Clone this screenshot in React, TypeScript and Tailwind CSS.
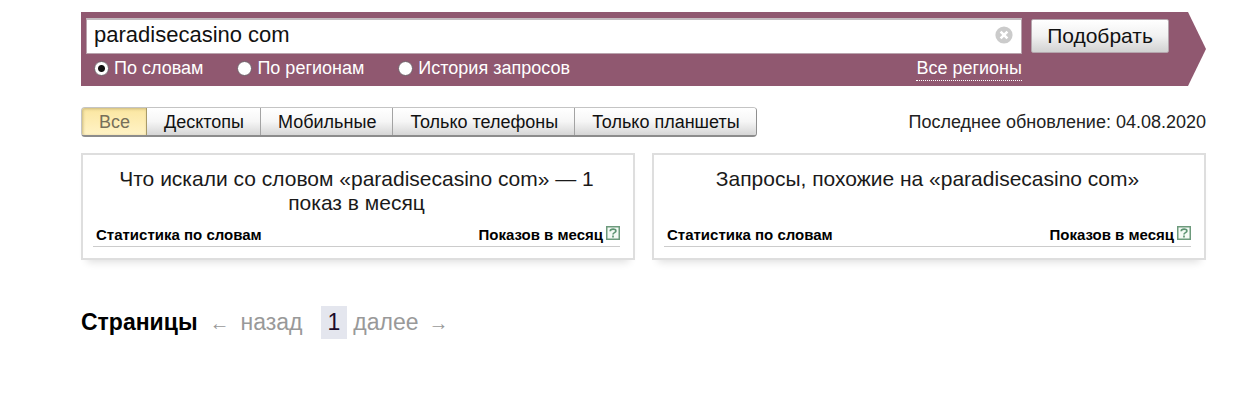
import { useState } from "react"

const modes = ["По словам", "По регионам", "История запросов"]
const devices = ["Все", "Десктопы", "Мобильные", "Только телефоны", "Только планшеты"]

const SearchBar = () => {
  const [query, setQuery] = useState("paradisecasino com")
  const [mode, setMode] = useState(modes[0])

  return (
    <form
      onSubmit={(e) => e.preventDefault()}
      className="flex h-[74px] items-start gap-[9px] bg-[#905870] pt-1.5 pr-[37px] pl-[5px] [clip-path:polygon(0_0,calc(100%-18px)_0,100%_50%,calc(100%-18px)_100%,0_100%)]"
    >
      <div className="min-w-0 flex-1">
        <div className="flex h-9 items-center border border-t-2 border-[#b9a3ad] border-t-[#c4bcc0] bg-white pr-2">
          <input
            type="text"
            aria-label="Запрос"
            value={query}
            onChange={(e) => setQuery(e.target.value)}
            className="h-full min-w-0 flex-1 bg-transparent pb-1 pl-[7px] text-[22px] text-[#111] outline-none"
          />
          <button type="button" aria-label="Очистить" className="mb-1" onClick={() => setQuery("")}>
            <svg viewBox="0 0 18 18" className="block size-[18px]">
              <circle cx="9" cy="9" r="8.6" fill="#cbcbcb" />
              <path d="M5.6 5.6l6.8 6.8M12.4 5.6l-6.8 6.8" stroke="#fff" strokeWidth="2.6" />
            </svg>
          </button>
        </div>
        <div className="flex items-center justify-between pl-2 text-lg text-white">
          <div className="flex gap-[34px]">
            {modes.map((item) => (
              <label key={item} className="flex items-center gap-[5px]">
                <input
                  type="radio"
                  name="mode"
                  checked={mode === item}
                  onChange={() => setMode(item)}
                  className="size-[15px] appearance-none rounded-full border border-[#6e6068] bg-white checked:bg-[radial-gradient(circle,#111_3px,#fff_4px)]"
                />
                {item}
              </label>
            ))}
          </div>
          <a href="#regions" className="border-b border-dotted border-white leading-6">
            Все регионы
          </a>
        </div>
      </div>
      <button
        type="submit"
        className="mt-px h-[34px] w-[138px] rounded-xs border border-[#b5a5ad] bg-linear-to-b from-white via-[#f1f1f1] to-[#d2d2d2] pb-0.5 text-[21px] text-[#111]"
      >
        Подобрать
      </button>
    </form>
  )
}

const DeviceTabs = () => {
  const [active, setActive] = useState("Все")

  return (
    <div className="flex h-[30px] overflow-hidden rounded-sm border border-b-2 border-[#c4c4c4] border-r-[#8f8f8f] border-b-[#8c8c8c] text-lg text-[#111]">
      {devices.map((device) => (
        <button
          key={device}
          type="button"
          onClick={() => setActive(device)}
          className={
            device === active
              ? "border-r border-[#a89a68] bg-linear-to-b from-[#fbe6a0] to-[#fff3c6] pr-4 pl-[17px] text-[#77705a] shadow-[inset_1px_1px_3px_#c8b67a]"
              : "border-r border-[#a3a3a3] bg-linear-to-b from-white via-[#f6f6f6] to-[#d6d6d6] pr-4 pb-0.5 pl-[17px] last:border-r-0"
          }
        >
          {device}
        </button>
      ))}
    </div>
  )
}

const StatCard = ({ title }: { title: string }) => (
  <section className="flex flex-1 flex-col justify-between border-2 border-[#dedede] bg-white pt-3 pr-[13px] pb-[11px] pl-2.5 shadow-[0_8px_8px_-6px_#ddd]">
    <h2 className="px-5 text-center text-[21px] leading-6 text-[#1a1a1a]">{title}</h2>
    <table className="mt-[9px] w-full text-[15px] leading-[22px] text-black">
      <thead>
        <tr className="border-b border-[#ccc]">
          <th className="pl-[3px] text-left font-bold">Статистика по словам</th>
          <th className="font-bold">
            <div className="flex items-center justify-end gap-[3px]">
              Показов в месяц
              <a href="#help" aria-label="Справка" className="mb-1">
                <svg viewBox="0 0 14 14" className="block size-3.5">
                  <rect x=".75" y=".75" width="12.5" height="12.5" fill="#f4faf5" stroke="#6d9a7c" strokeWidth="1.5" />
                  <path d="M4.2 5.2C4.4 2.6 9.9 2.6 9.9 4.9C9.9 6.7 7 6.6 7 8.5M7 9.6v1.8" fill="none" stroke="#5d9472" strokeWidth="1.7" />
                </svg>
              </a>
            </div>
          </th>
        </tr>
      </thead>
    </table>
  </section>
)

const Pager = () => (
  <nav className="mt-[46px] flex items-center text-[23px] leading-[33px] text-[#999]">
    <b className="text-black">Страницы</b>
    <span className="ml-3 text-xl">←</span>
    <span className="ml-[11px]">назад</span>
    <span className="mr-1.5 ml-[18px] bg-[#e4e6ee] px-[7px] text-[#1a0a2a]">1</span>
    <span>далее</span>
    <span className="ml-2.5 text-xl">→</span>
  </nav>
)

const App = () => (
  <main className="bg-white pt-3 pr-11 pl-[81px] font-['Liberation_Sans',Arial,sans-serif]">
    <SearchBar />
    <div className="mt-[21px] flex items-center justify-between">
      <DeviceTabs />
      <p className="text-lg text-[#222]">Последнее обновление: 04.08.2020</p>
    </div>
    <div className="mt-4 flex gap-[17px]">
      <StatCard title="Что искали со словом «paradisecasino com» — 1 показ в месяц" />
      <StatCard title="Запросы, похожие на «paradisecasino com»" />
    </div>
    <Pager />
  </main>
)

export default App
